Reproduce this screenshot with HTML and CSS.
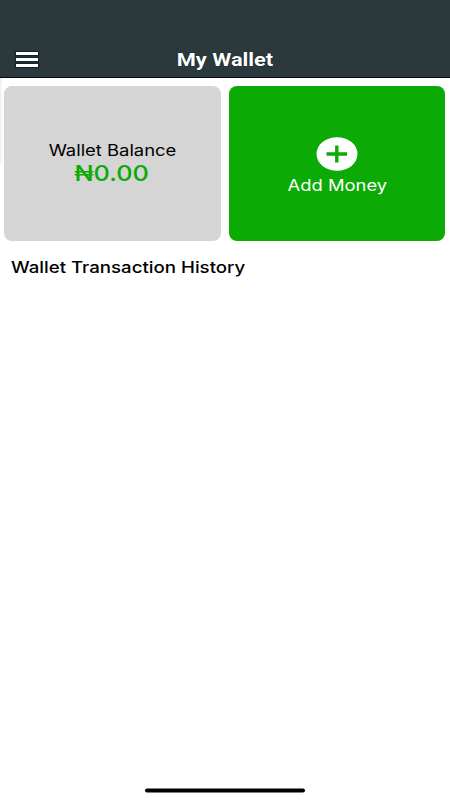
FILE: index.html
```html
<!DOCTYPE html>
<html lang="en">
<head>
<meta charset="utf-8">
<title>My Wallet</title>
<link rel="stylesheet" href="styles.css">
</head>
<body>
<header class="topbar">
  <button class="menu" aria-label="Menu"><i></i><i></i><i></i></button>
  <h1 class="title">My Wallet</h1>
</header>
<main>
  <section class="cards">
    <div class="card balance">
      <span class="label wide">Wallet Balance</span>
      <span class="amount wide">₦0.00</span>
    </div>
    <div class="card add">
      <svg class="plus" viewBox="0 0 42 34" width="42" height="34">
        <ellipse cx="21" cy="17" rx="20.5" ry="16.8" fill="#fff"/>
        <path d="M10.5 17H31M20.8 8.5V25.5" stroke="#0caa05" stroke-width="3.4" fill="none"/>
      </svg>
      <span class="add-label wide">Add Money</span>
    </div>
  </section>
  <h2 class="history wide">Wallet Transaction History</h2>
</main>
<footer class="home"><div class="home-bar"></div></footer>
</body>
</html>
```

FILE: styles.css
```css
* { box-sizing: border-box; }
body {
  margin: 0;
  height: 800px;
  display: flex;
  flex-direction: column;
  overflow: hidden;
  background: #fff;
  color: #000;
  font-family: Inter, "Liberation Sans", sans-serif;
}
.topbar {
  height: 78px;
  padding: 41px 16px 0;
  display: grid;
  grid-template-columns: 22px 1fr 22px;
  align-items: center;
  background: #2b383c;
  border-bottom: 1px solid #000a10;
}
.menu {
  display: flex;
  flex-direction: column;
  gap: 3px;
  padding: 0;
  border: 0;
  background: none;
}
.menu i { width: 22px; height: 3px; background: #fff; box-shadow: 0 0 1px 1px #13252a; }
.title {
  margin: 0;
  text-align: center;
  font: 700 18px/36px Roboto, sans-serif;
  color: #fff;
  text-shadow: 0 0 1px #00151b;
  transform: translateY(1px) scaleX(1.21);
}
main {
  flex: 1;
  background: linear-gradient(90deg, #eee, #fff) 0 0 / 3px 86px no-repeat;
}
.cards {
  display: grid;
  grid-template-columns: 217px 216px;
  gap: 8px;
  padding: 8px 4px 0;
}
.card {
  height: 155px;
  border-radius: 8px;
  display: flex;
  flex-direction: column;
  align-items: center;
}
.balance { background: #d5d5d5; padding-top: 54px; }
.add { background: #0caa05; color: #fff; padding-top: 51px; }
.wide { transform: scaleX(1.15); white-space: nowrap; }
.label { font-size: 16px; line-height: 20px; }
.amount {
  font-size: 22px;
  line-height: 26px;
  font-weight: 500;
  color: #0caa05;
  transform: translateX(-1px) scaleX(1.15);
}
.plus { display: block; }
.add-label { font-size: 16px; line-height: 20px; margin-top: 4px; }
.history {
  width: max-content;
  margin: 16px 0 0 11px;
  font-size: 16px;
  line-height: 20px;
  font-weight: 500;
  transform: scaleX(1.166);
  transform-origin: 0 50%;
}
.home { display: flex; justify-content: center; height: 12px; }
.home-bar { width: 160px; height: 4px; border-radius: 2px; background: #000; transform: translateY(0.5px); }
```
